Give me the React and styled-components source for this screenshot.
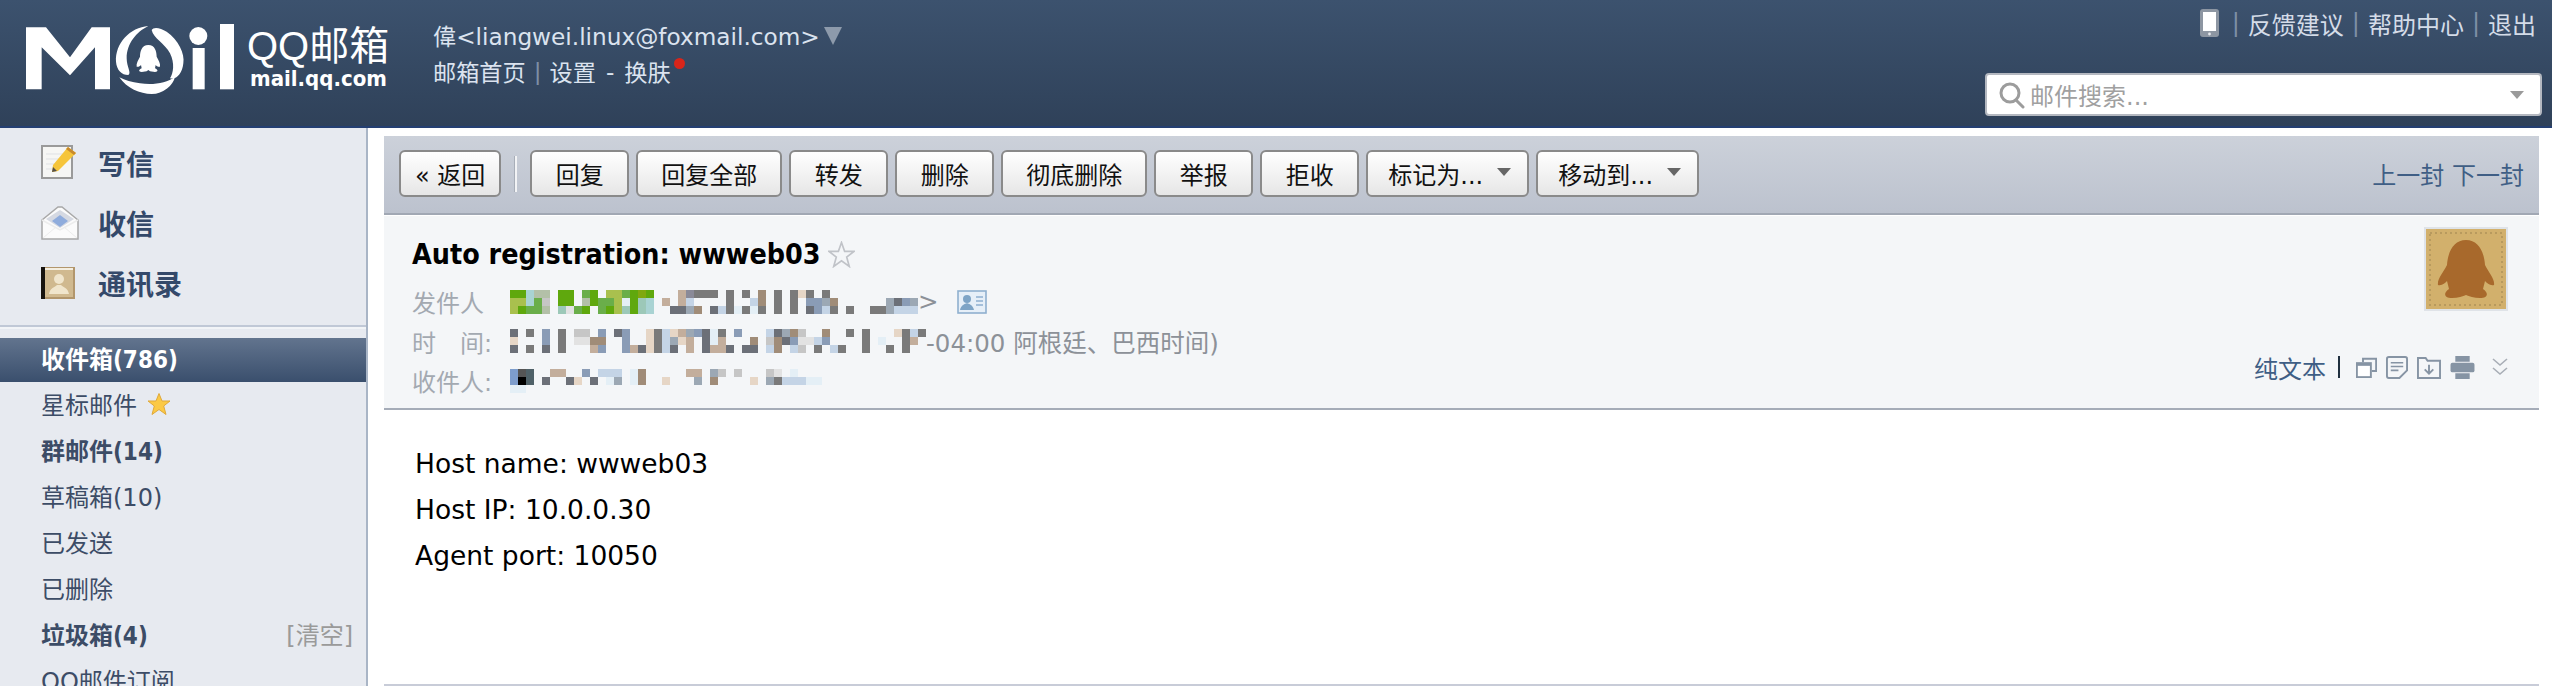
import styled, { createGlobalStyle } from 'styled-components';

const SANS = `"DejaVu Sans", "Noto Sans CJK SC", sans-serif`;
const SANS_BOLD = `"DejaVu Sans Condensed", "DejaVu Sans", "Noto Sans CJK SC", sans-serif`;

const GlobalStyle = createGlobalStyle`
  html, body {
    margin: 0;
    padding: 0;
    background: #fff;
  }
  body {
    font-family: ${SANS};
  }
`;

const PALETTE = {
  g: '#5fa80d', G: '#80a810', l: '#a9c04e', t: '#a9d3d3', s: '#b3c0a8', m: '#6aae4a',
  c: '#c6c6c6', q: '#9cc8b8', k: '#7a7a7a', b: '#8a8a98', n: '#c3ae9c', u: '#8a9cb6',
  p: '#c4d4e6', e: '#e6d6c6', d: '#6c7078', w: '#e2e2e2', a: '#9ca8b4', f: '#e4eff6',
  h: '#a08c78', B: '#7d9dcc', Z: '#555555', Y: '#4f6168', X: '#000000',
};

const SENDER = [
  'ggtss.gg.mg.llmgGg...nbkkk.k.k.h.k.kek.k',
  'lltmc.gg.sgmmlfgqt.n.np....k..ph.k.k.uuah......adua',
  'lgmms.qwmg.mglqgqt..ddah.dpkfkfk.k.k.dupk.k..kkappp',
];
const TIME = [
  'd.k.u.k.cc.u.du..ekpenaudfk.u...pdahc..h..k.k...ekpk',
  'e...u.k.wwhh..u..ekpaen.dfn...h.chduwwpu....k.f..kn',
  'd.k.d.k...nu..undekpd.n.dnnd.dd.ph.pc.k.pk..k..k.k',
];
const RECEIVER = [
  'BZY..nn..u.ppp.fh.....nn.ac.c...cw.f',
  'BXY.d..de.d.fa.fh..e...a.h....e.akpppff',
  'ff',
];

const FOLDERS = [
  { name: '星标邮件', star: true },
  { name: '群邮件(14)', bold: true },
  { name: '草稿箱(10)' },
  { name: '已发送' },
  { name: '已删除' },
  { name: '垃圾箱(4)', bold: true, clear: true },
  { name: 'QQ邮件订阅' },
];

const BUTTONS = ['回复', '回复全部', '转发', '删除', '彻底删除', '举报', '拒收'];

function Mosaic({ rows, cols }) {
  return (
    <MosaicSvg width={cols * 8} height={24} viewBox={`0 0 ${cols * 8} 24`}>
      {rows.map((row, y) =>
        row.split('').map((ch, x) =>
          PALETTE[ch] ? <rect key={`${x}-${y}`} x={x * 8} y={y * 8} width="8" height="8" fill={PALETTE[ch]} /> : null
        )
      )}
    </MosaicSvg>
  );
}

function Logo() {
  return (
    <svg width="220" height="80" viewBox="0 0 660 240" fill="#fff">
      <path d="M18 22H78L150 112L215 22H270V208H225V82L150 166L65 82V208H18Z" />
      <path d="M385 18C330 22 285 70 288 125C290 150 305 165 325 165C335 160 320 140 320 115C320 70 350 35 385 18Z" />
      <path d="M395 30C400 20 420 22 440 35C475 60 495 100 490 130C487 160 470 180 450 175C460 160 465 130 450 100C435 70 400 55 395 30Z" />
      <path d="M298 172C320 205 360 222 395 222C430 222 460 195 465 170C440 190 400 195 360 190C335 187 315 180 298 172Z" />
      <path d="M385 75C365 75 360 95 360 110C355 120 348 130 350 140C355 142 360 138 363 135L365 145C355 150 355 155 365 156L380 154L385 150L390 154L405 156C415 155 415 150 405 145L407 135C410 138 415 142 420 140C422 130 415 120 410 110C410 95 405 75 385 75Z" />
      <circle cx="535" cy="48" r="27" />
      <rect x="518" y="84" width="36" height="124" />
      <rect x="600" y="12" width="42" height="196" />
    </svg>
  );
}

function ComposeIcon() {
  return (
    <svg width="36" height="36" viewBox="0 0 36 36">
      <rect x="1" y="1" width="30" height="32" fill="#f6f6f4" stroke="#9a9a9a" strokeWidth="2" />
      <path d="M5 9H24M5 14H20M5 19H16M5 24H12" stroke="#dfe1e4" strokeWidth="1" />
      <path d="M27 2L35 8L17 26L11 27L12 20Z" fill="#f6c53a" />
      <path d="M27 2L35 8L33 10L25 4Z" fill="#c98a2b" />
      <path d="M11 27L12 22L16 26Z" fill="#55504a" />
    </svg>
  );
}

function InboxIcon() {
  return (
    <svg width="38" height="34" viewBox="0 0 38 34">
      <path d="M1 14L17 1H21L37 14V33H1Z" fill="#fbfbfb" stroke="#a8a8a8" strokeWidth="1.5" />
      <path d="M5 13L19 4L33 13L19 22Z" fill="#d5d9e2" />
      <path d="M11 15L19 9L27 15L19 21Z" fill="#8facdc" />
      <path d="M1 14L19 24L37 14" fill="none" stroke="#ececec" strokeWidth="1.5" />
      <path d="M2 32L15 21M36 32L23 21" stroke="#ececec" strokeWidth="1" />
    </svg>
  );
}

function ContactsIcon() {
  return (
    <svg width="34" height="32" viewBox="0 0 34 32">
      <rect width="34" height="32" fill="#b2966c" />
      <rect x="0" width="4" height="32" fill="#17130e" />
      <rect x="4" y="2" width="28" height="28" fill="#d0b98f" />
      <rect x="4" y="1" width="28" height="2" fill="#f4eee0" />
      <circle cx="18" cy="12" r="5" fill="#f0e5cc" />
      <path d="M8 27C9 21 14 20 16 18H20C22 20 27 21 28 27Z" fill="#f0e5cc" />
    </svg>
  );
}

function SearchIcon() {
  return (
    <svg width="26" height="28" viewBox="0 0 26 28" fill="none" stroke="#9c9c9c" strokeWidth="3">
      <circle cx="11" cy="12" r="9" />
      <path d="M17 19L24 26" strokeLinecap="round" />
    </svg>
  );
}

function PhoneIcon() {
  return (
    <PhoneSvg width="19" height="28" viewBox="0 0 19 28">
      <rect width="19" height="28" rx="3" fill="#8d96a2" />
      <rect x="3" y="3" width="13" height="19" fill="#fff" />
      <circle cx="9.5" cy="25" r="1.4" fill="#e6e8ec" />
    </PhoneSvg>
  );
}

function StarIcon({ size = 24 }) {
  return (
    <svg width={size} height={size} viewBox="0 0 24 24">
      <path d="M12 1.5L15 9H23L16.7 14L19 22.5L12 17.5L5 22.5L7.3 14L1 9H9Z" fill="#fbc945" stroke="#e0a93a" strokeWidth="1" />
    </svg>
  );
}

function HollowStar() {
  return (
    <svg width="27" height="27" viewBox="0 0 26 26">
      <path d="M13 1.5L16 10H25L18 15.5L20.5 24.5L13 19L5.5 24.5L8 15.5L1 10H10Z" fill="none" stroke="#c0c3c8" strokeWidth="1.6" />
    </svg>
  );
}

function CardIcon() {
  return (
    <svg width="30" height="24" viewBox="0 0 30 24">
      <rect x="1" y="1" width="28" height="22" fill="#e6eff8" stroke="#8fb0cf" strokeWidth="1.6" />
      <circle cx="10" cy="9" r="4" fill="#7ea4c6" />
      <path d="M3 20C4 15 8 14 10 13C12 14 16 15 17 20Z" fill="#7ea4c6" />
      <path d="M19 7H26M19 11H26M19 15H26" stroke="#8fb0cf" strokeWidth="1.5" />
    </svg>
  );
}

function WindowsIcon() {
  return (
    <svg width="21" height="21" viewBox="0 0 24 24" fill="none" stroke="#8694a4" strokeWidth="2.2">
      <path d="M8 6V2H23V16H18" />
      <rect x="1" y="7" width="16" height="16" fill="#fff" />
      <path d="M1 9H17" />
    </svg>
  );
}

function NoteIcon() {
  return (
    <svg width="22" height="23" viewBox="0 0 23 24" fill="none" stroke="#8694a4" strokeWidth="2">
      <path d="M14 23H3C2 23 1 22 1 21V3C1 2 2 1 3 1H20C21 1 22 2 22 3V15L14 23Z" />
      <path d="M5 7H18M5 11H18M5 15H13" strokeWidth="1.6" />
    </svg>
  );
}

function SaveIcon() {
  return (
    <svg width="24" height="23" viewBox="0 0 25 24" fill="none" stroke="#8694a4" strokeWidth="2">
      <path d="M1 23V2H9L11 5H24V23Z" />
      <path d="M12.5 9V18M8 14L12.5 18.5L17 14" />
    </svg>
  );
}

function PrintIcon() {
  return (
    <svg width="25" height="23" viewBox="0 0 25 24" fill="#8694a4">
      <rect x="5" y="0" width="15" height="6" />
      <rect x="0" y="7" width="25" height="10" rx="2" />
      <rect x="5" y="18" width="15" height="6" />
    </svg>
  );
}

function MoreIcon() {
  return (
    <svg width="16" height="20" viewBox="0 0 16 20" fill="none" stroke="#a8aeb6" strokeWidth="1.6">
      <path d="M1 2L8 8L15 2M1 11L8 17L15 11" />
    </svg>
  );
}

function Penguin() {
  return (
    <svg width="80" height="80" viewBox="0 0 80 80">
      <rect width="80" height="80" fill="#d2b06c" />
      <rect x="4" y="4" width="72" height="72" fill="none" stroke="#b89a5e" strokeWidth="2" strokeDasharray="2 3" />
      <path d="M40 11C28 11 22 22 21 36C17 44 11 50 12 56C16 57 19 54 21 52L23 60C17 64 18 69 26 69C32 69 37 67 40 66C43 67 48 69 54 69C62 69 63 64 57 60L59 52C61 54 64 57 68 56C69 50 63 44 59 36C58 22 52 11 40 11Z" fill="#a8692c" />
    </svg>
  );
}

export default function App() {
  return (
    <Page>
      <GlobalStyle />
      <Header>
        <HeaderLeft>
          <Logo />
          <Brand>
            <BrandName>QQ邮箱</BrandName>
            <BrandUrl>mail.qq.com</BrandUrl>
          </Brand>
          <UserBlock>
            <UserLine>
              偉&lt;liangwei.linux@foxmail.com&gt;
              <UserCaret />
            </UserLine>
            <UserLine>
              邮箱首页<Pipe>|</Pipe>设置<Dash>-</Dash>换肤
              <RedDot />
            </UserLine>
          </UserBlock>
        </HeaderLeft>
        <HeaderRight>
          <TopLinks>
            <PhoneIcon />
            <Pipe>|</Pipe>反馈建议<Pipe>|</Pipe>帮助中心<Pipe>|</Pipe>退出
          </TopLinks>
          <SearchBox>
            <SearchIcon />
            <Placeholder>邮件搜索...</Placeholder>
            <SearchCaret />
          </SearchBox>
        </HeaderRight>
      </Header>
      <Content>
        <Sidebar>
          <QuickLinks>
            <QuickLink>
              <QuickIcon><ComposeIcon /></QuickIcon>写信
            </QuickLink>
            <QuickLink>
              <QuickIcon><InboxIcon /></QuickIcon>收信
            </QuickLink>
            <QuickLink>
              <QuickIcon><ContactsIcon /></QuickIcon>通讯录
            </QuickLink>
          </QuickLinks>
          <InboxRow>收件箱(786)</InboxRow>
          {FOLDERS.map((f) => (
            <Folder key={f.name} $bold={f.bold}>
              {f.name}
              {f.star && <StarSlot><StarIcon /></StarSlot>}
              {f.clear && <ClearLink>[清空]</ClearLink>}
            </Folder>
          ))}
        </Sidebar>
        <Main>
          <Toolbar>
            <BackButton>« 返回</BackButton>
            <ToolSep />
            {BUTTONS.map((b) => (
              <ToolButton key={b}>{b}</ToolButton>
            ))}
            <MenuButton>标记为...<MenuCaret /></MenuButton>
            <MenuButton>移动到...<MenuCaret /></MenuButton>
            <Pager>上一封 下一封</Pager>
          </Toolbar>
          <MailHead>
            <MailInfo>
              <Subject>
                Auto registration: wwweb03
                <HollowStar />
              </Subject>
              <MetaRow>
                <MetaLabel>发件人</MetaLabel>
                <Mosaic rows={SENDER} cols={51} />
                <MetaText>&gt;</MetaText>
                <CardSlot><CardIcon /></CardSlot>
              </MetaRow>
              <MetaRow>
                <MetaLabel>时　间:</MetaLabel>
                <Mosaic rows={TIME} cols={52} />
                <MetaText>-04:00 阿根廷、巴西时间)</MetaText>
              </MetaRow>
              <MetaRow>
                <MetaLabel>收件人:</MetaLabel>
                <Mosaic rows={RECEIVER} cols={39} />
              </MetaRow>
            </MailInfo>
            <MailSide>
              <Avatar><Penguin /></Avatar>
              <MailActions>
                <PlainText>纯文本</PlainText>
                <ActionSep />
                <WindowsIcon />
                <NoteIcon />
                <SaveIcon />
                <PrintIcon />
                <MoreSlot><MoreIcon /></MoreSlot>
              </MailActions>
            </MailSide>
          </MailHead>
          <MailBody>
            <div>Host name: wwweb03</div>
            <div>Host IP: 10.0.0.30</div>
            <div>Agent port: 10050</div>
          </MailBody>
        </Main>
      </Content>
    </Page>
  );
}

const Page = styled.div`
  width: 2552px;
  height: 686px;
  display: flex;
  flex-direction: column;
  overflow: hidden;
`;

const Header = styled.header`
  height: 126px;
  flex: none;
  display: flex;
  justify-content: space-between;
  background: linear-gradient(#3c526e, #2f4159);
  border-bottom: 2px solid #243f72;
`;

const HeaderLeft = styled.div`
  display: flex;
  padding: 20px 0 0 20px;
  align-items: flex-start;
`;

const Brand = styled.div`
  margin: 5px 0 0 7px;
  width: 160px;
  color: #fff;
`;

const BrandName = styled.div`
  font-family: "Liberation Sans", "Noto Sans CJK SC", sans-serif;
  font-size: 40px;
  line-height: 42px;
  height: 42px;
  white-space: nowrap;
`;

const BrandUrl = styled.div`
  margin-left: 3px;
  font-family: ${SANS_BOLD};
  font-weight: bold;
  font-size: 22px;
  line-height: 24px;
  white-space: nowrap;
`;

const UserBlock = styled.div`
  margin: -3px 0 0 26px;
  color: #dbe3ef;
`;

const UserLine = styled.div`
  display: flex;
  align-items: center;
  height: 36px;
  font-size: 23.2px;
  white-space: nowrap;
`;

const UserCaret = styled.span`
  margin: 2px 0 0 4px;
  border-left: 9px solid transparent;
  border-right: 9px solid transparent;
  border-top: 18px solid #8d9aab;
`;

const Pipe = styled.span`
  margin: 0 8px;
  color: #7e8fa6;
`;

const Dash = styled.span`
  margin: 0 10px;
`;

const RedDot = styled.span`
  width: 11px;
  height: 11px;
  margin: -16px 0 0 3px;
  border-radius: 50%;
  background: #d8251a;
`;

const HeaderRight = styled.div`
  display: flex;
  flex-direction: column;
  align-items: flex-end;
  padding-right: 10px;
`;

const TopLinks = styled.div`
  display: flex;
  align-items: center;
  height: 46px;
  padding-right: 6px;
  font-size: 24px;
  color: #d4dce8;
`;

const PhoneSvg = styled.svg`
  margin-right: 5px;
`;

const SearchBox = styled.div`
  box-sizing: border-box;
  width: 557px;
  height: 43px;
  margin-top: 27px;
  display: flex;
  align-items: center;
  padding: 0 16px 0 12px;
  background: #fff;
  border: 2px solid #b4b8c0;
  border-radius: 4px;
`;

const Placeholder = styled.span`
  flex: 1;
  margin-left: 5px;
  font-size: 24px;
  color: #a0a0a0;
`;

const SearchCaret = styled.span`
  border-left: 7px solid transparent;
  border-right: 7px solid transparent;
  border-top: 8px solid #9a9a9a;
`;

const Content = styled.div`
  flex: 1;
  display: flex;
  min-height: 0;
`;

const Sidebar = styled.aside`
  width: 366px;
  flex: none;
  background: #e7eaf0;
  border-right: 2px solid #a9b5c6;
  overflow: hidden;
`;

const QuickLinks = styled.div`
  margin-bottom: 11px;
  padding: 5px 0 12px 41px;
  border-bottom: 2px solid #c0c8d6;
  box-shadow: 0 2px 0 #f2f4f7;
`;

const QuickLink = styled.div`
  display: flex;
  align-items: center;
  height: 60px;
  font-size: 28px;
  font-weight: bold;
  color: #34496a;
`;

const QuickIcon = styled.span`
  width: 57px;
  display: flex;
`;

const InboxRow = styled.div`
  height: 44px;
  line-height: 44px;
  padding-left: 41px;
  font-family: ${SANS_BOLD};
  font-size: 24px;
  font-weight: bold;
  color: #fff;
  background: linear-gradient(#62748e, #3a4f6d);
`;

const Folder = styled.div`
  box-sizing: border-box;
  display: flex;
  align-items: center;
  height: 46px;
  padding: 0 13px 3px 41px;
  font-family: ${(p) => (p.$bold ? SANS_BOLD : SANS)};
  font-size: 24px;
  font-weight: ${(p) => (p.$bold ? 'bold' : 'normal')};
  color: #3c4c66;
`;

const StarSlot = styled.span`
  display: flex;
  margin-left: 10px;
`;

const ClearLink = styled.span`
  margin-left: auto;
  font-family: ${SANS};
  font-weight: normal;
  color: #9a9a9a;
`;

const Main = styled.main`
  flex: 1;
  min-width: 0;
  display: flex;
  flex-direction: column;
  padding: 8px 13px 0 16px;
`;

const Toolbar = styled.div`
  box-sizing: border-box;
  height: 79px;
  flex: none;
  display: flex;
  align-items: center;
  gap: 7px;
  padding: 0 15px 2px;
  background: linear-gradient(#ccd1da, #bcc2ce);
  border-bottom: 2px solid #a1a8b4;
`;

const ToolButton = styled.div`
  box-sizing: border-box;
  min-width: 99px;
  height: 47px;
  display: flex;
  align-items: center;
  justify-content: center;
  padding: 0 23px;
  font-size: 24px;
  color: #111;
  background: linear-gradient(#ffffff, #e6e6e6);
  border: 2px solid #8a8a8a;
  border-radius: 6px;
  white-space: nowrap;
`;

const BackButton = styled(ToolButton)`
  padding: 0 14px;
`;

const MenuButton = styled(ToolButton)`
  padding: 0 16px 0 20px;
`;

const MenuCaret = styled.span`
  margin: 0 0 4px 14px;
  border-left: 7px solid transparent;
  border-right: 7px solid transparent;
  border-top: 8px solid #666;
`;

const ToolSep = styled.span`
  width: 2px;
  height: 36px;
  margin: 0 6px 0 7px;
  background: #f2f3f5;
  box-shadow: -1px 0 0 #a8aeb8;
`;

const Pager = styled.div`
  margin-left: auto;
  font-size: 24px;
  color: #3f5e85;
  white-space: nowrap;
`;

const MailHead = styled.section`
  box-sizing: border-box;
  height: 194px;
  margin-top: 1px;
  flex: none;
  display: flex;
  justify-content: space-between;
  padding: 21px 31px 0 28px;
  background: #f4f6f8;
  border-bottom: 2px solid #a5acb8;
`;

const MailInfo = styled.div`
  min-width: 0;
`;

const Subject = styled.div`
  display: flex;
  align-items: center;
  gap: 7px;
  height: 34px;
  margin-bottom: 11px;
  font-family: ${SANS_BOLD};
  font-size: 28.4px;
  font-weight: bold;
  color: #000;
`;

const MetaRow = styled.div`
  display: flex;
  align-items: center;
  height: 39.5px;
  font-size: 24.5px;
  color: #8c9198;
  white-space: nowrap;
`;

const MetaLabel = styled.span`
  width: 98px;
  flex: none;
  font-size: 24px;
  color: #a3a9b1;
`;

const MosaicSvg = styled.svg`
  flex: none;
  filter: blur(0.6px);
`;

const MetaText = styled.span`
  margin-left: 0;
`;

const CardSlot = styled.span`
  display: flex;
  margin-left: 18px;
`;

const MailSide = styled.div`
  display: flex;
  flex-direction: column;
  align-items: flex-end;
`;

const Avatar = styled.div`
  display: flex;
  padding: 2px;
  margin-top: -10px;
  background: #dfe3e8;
`;

const MailActions = styled.div`
  display: flex;
  align-items: center;
  gap: 9px;
  height: 30px;
  margin-top: 41px;
`;

const PlainText = styled.span`
  font-size: 24px;
  color: #3f5e85;
`;

const ActionSep = styled.span`
  width: 2px;
  height: 22px;
  margin: 0 7px 0 3px;
  background: #20303f;
`;

const MoreSlot = styled.span`
  display: flex;
  margin-left: 8px;
`;

const MailBody = styled.div`
  flex: 1;
  padding: 31px 31px 0;
  font-size: 26.5px;
  line-height: 46px;
  color: #000;
  border-bottom: 2px solid #c8ccd8;
`;
